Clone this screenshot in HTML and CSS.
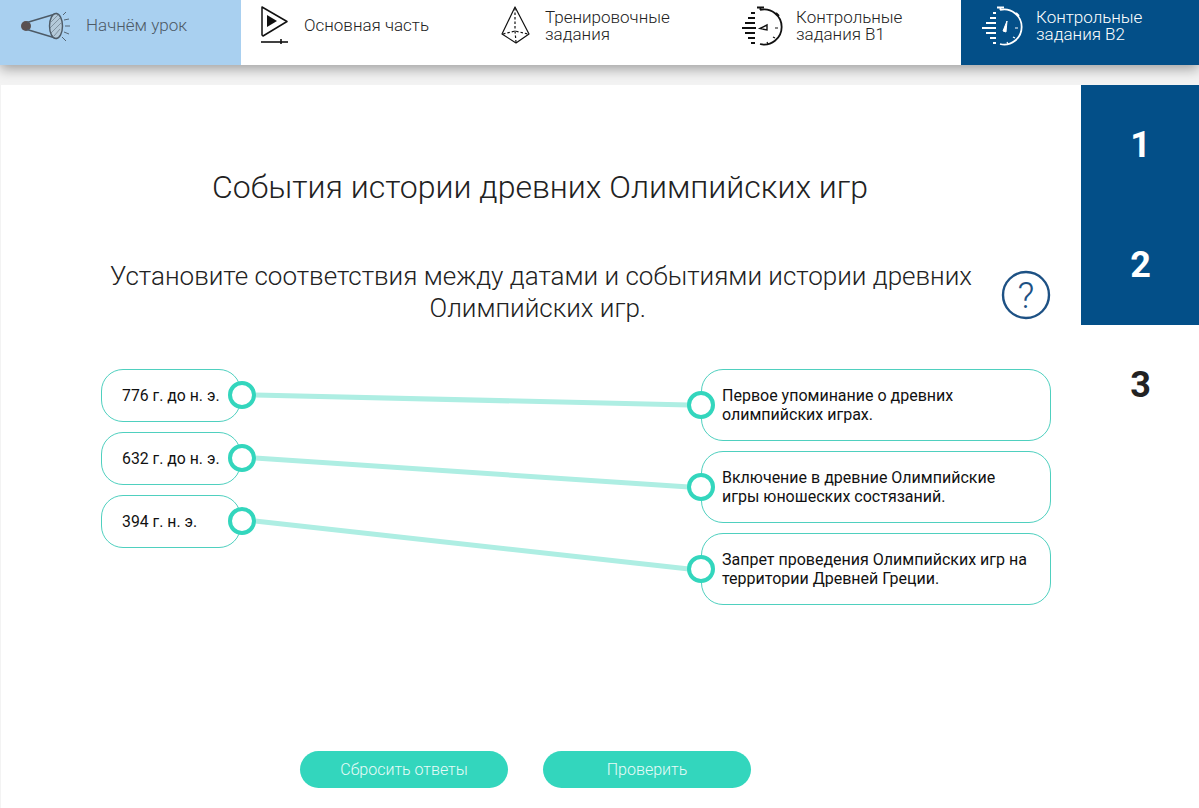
FILE: index.html
```html
<!DOCTYPE html>
<html lang="en">
<head>
    <meta charset="UTF-8">
    <meta name="viewport" content="width=device-width, initial-scale=1.0">
    <title>Контрольные задания B2</title>
    <link rel="stylesheet" href="styles.css">
</head>
<body>
    <header class="topbar">
        <a class="tab tab-intro">
            <svg width="72" height="65" viewBox="14 0 72 65" fill="none" stroke="#4d5a66" stroke-width="1">
                <circle cx="26" cy="26" r="5" fill="#5a5050" stroke="none"/>
                <path d="M27 22.5L57 13.5M27 29.5L57 38.5" stroke-width="1.4"/>
                <ellipse cx="56" cy="26" rx="6.5" ry="12.5" fill="#b4c9d9" stroke-width="1.4"/>
                <path d="M51 22l7-7M50 28l10-10M51 33l10-10M54 36l6-7" stroke-width="0.5"/>
                <path d="M63 15l3-3M64 20l5-1M65 26h5M64 32l5 2M62 37l4 4" stroke-width="0.9"/>
            </svg>
            <span>Начнём урок</span>
        </a>
        <a class="tab">
            <svg width="49" height="65" viewBox="255 0 49 65" fill="none" stroke="#111">
                <path d="M262 7L287 21.5L263 36L262 35Z" stroke-width="1.5" stroke-linejoin="round"/>
                <path d="M267 15L277 21L267 27Z" fill="#111" stroke="none"/>
                <path d="M261 42H288" stroke-width="1.6"/>
                <path d="M281 39V44" stroke-width="1.6"/>
            </svg>
            <span>Основная часть</span>
        </a>
        <a class="tab">
            <svg width="50" height="65" viewBox="495 0 50 65" fill="none" stroke="#111" stroke-width="1.2">
                <path d="M515 7L502 34L516 43L529 34Z" stroke-linejoin="round"/>
                <path d="M515 8V31M503 34L515 31L528 34M515 31L516 42" stroke-dasharray="2.5 2"/>
            </svg>
            <span>Тренировочные<br>задания</span>
        </a>
        <a class="tab">
            <svg width="61" height="65" viewBox="735 0 61 65" fill="none" stroke="#111" stroke-width="1.8">
                <path d="M760 10A17.5 17.5 0 1 1 760 44"/>
                <path d="M757 7.5H764M760.5 7.5V10M776 13L779 16"/>
                <path d="M751 13h4M748 18h7M745 23h10M742 28h14M745 33h10M748 38h7M751 43h4"/>
                <path d="M760 28.5L767 25V30Z" stroke-width="1.4"/>
                <path d="M775 28h3M773 37l2 1M767 42l1 2" stroke-width="1.2"/>
            </svg>
            <span>Контрольные<br>задания B1</span>
        </a>
        <a class="tab tab-active">
            <svg width="61" height="65" viewBox="975 0 61 65" fill="none" stroke="#fff" stroke-width="1.8">
                <path d="M1000 10A17.5 17.5 0 1 1 1000 44"/>
                <path d="M997 7.5H1004M1000.5 7.5V10M1016 13L1019 16"/>
                <path d="M993 13h3M990 18h6M986 23h10M982 28h14M986 33h10M990 38h6M993 43h3"/>
                <path d="M1007 21L1003 31L1006 32Z" fill="#fff" stroke-width="1"/>
                <path d="M1015 28h3M1013 37l2 1M1007 42l1 2" stroke-width="1.2"/>
            </svg>
            <span>Контрольные<br>задания B2</span>
        </a>
    </header>

    <main class="page">
        <section class="task">
            <h1 class="task-title">События истории древних Олимпийских игр</h1>

            <div class="question">
                <p class="question-text">Установите соответствия между датами и событиями истории древних Олимпийских игр.&nbsp;</p>
                <svg class="help" width="50" height="50" viewBox="0 0 50 50" fill="none">
                    <circle cx="25" cy="25" r="23" stroke="#1d5184" stroke-width="2.4"/>
                    <text x="25" y="38" text-anchor="middle" class="help-mark">?</text>
                </svg>
            </div>

            <div class="match">
                <ul class="match-col dates">
                    <li class="pill date">776 г. до н. э.</li>
                    <li class="pill date">632 г. до н. э.</li>
                    <li class="pill date">394 г. н. э.</li>
                </ul>
                <ul class="match-col events">
                    <li class="pill event">Первое упоминание о древних олимпийских играх.</li>
                    <li class="pill event">Включение в древние Олимпийские игры юношеских состязаний.</li>
                    <li class="pill event">Запрет проведения Олимпийских игр на территории Древней Греции.</li>
                </ul>
                <!-- lines and dots go over the pills -->
                <svg class="match-lines" width="950" height="236" viewBox="0 0 950 236" fill="none">
                    <g stroke="#aeeee3" stroke-width="5">
                        <path d="M154 26L588 36"/>
                        <path d="M154 89L588 118"/>
                        <path d="M154 152L588 200"/>
                    </g>
                    <g stroke="#33d6bd" stroke-width="4" fill="#fff">
                        <circle cx="141" cy="26" r="12"/>
                        <circle cx="141" cy="89" r="12"/>
                        <circle cx="141" cy="152" r="12"/>
                        <circle cx="600" cy="36" r="12"/>
                        <circle cx="600" cy="118" r="12"/>
                        <circle cx="600" cy="200" r="12"/>
                    </g>
                </svg>
            </div>

            <div class="actions">
                <button class="btn">Сбросить ответы</button>
                <button class="btn">Проверить</button>
            </div>
        </section>

        <nav class="steps">
            <a class="step step-done">1</a>
            <a class="step step-done">2</a>
            <a class="step">3</a>
        </nav>
    </main>
</body>
</html>
```

FILE: styles.css
```css
* {
    box-sizing: border-box;
}

body {
    margin: 0;
    height: 808px;
    overflow: hidden;
    background-color: #f3f3f3;
    font-family: Roboto, "Liberation Sans", sans-serif;
    color: #222;
}

.topbar {
    position: relative;
    z-index: 2;
    display: grid;
    grid-template-columns: 241px 240px 240px 240px 1fr;
    height: 65px;
    background-color: #fff;
    box-shadow: 0 4px 12px rgba(0, 0, 0, 0.35);
}

.tab {
    display: flex;
    align-items: center;
    padding-left: 14px;
    font-size: 17px;
    font-weight: 300;
    line-height: 17px;
    color: #222;
}

.tab svg {
    flex-shrink: 0;
}

.tab span {
    margin-bottom: 14px;
}

.tab-intro {
    background-color: #a9d0f0;
    color: #4d5a66;
}

.tab-active {
    background-color: #034f88;
    color: #fff;
}

.page {
    display: flex;
    height: 723px;
    margin: 20px 0 0 1px;
    background-color: #fff;
}

.task {
    display: flex;
    flex-direction: column;
    width: 1080px;
    padding: 0 30px 20px 100px;
}

.task-title {
    margin: 83px 0 0;
    padding-right: 72px;
    font-size: 32px;
    font-weight: 300;
    line-height: 38px;
    text-align: center;
}

.question {
    display: flex;
    align-items: center;
    gap: 20px;
    margin-top: 54px;
}

.question-text {
    flex: 1;
    margin: 0;
    font-size: 26px;
    font-weight: 300;
    line-height: 32px;
    text-align: center;
}

.help {
    flex-shrink: 0;
    margin-top: 6px;
}

.help-mark {
    font-family: Roboto, sans-serif;
    font-size: 37px;
    font-weight: 300;
    fill: #1d5184;
}

.match {
    position: relative;
    display: flex;
    justify-content: space-between;
    height: 236px;
    margin-top: 45px;
}

.match-col {
    display: flex;
    flex-direction: column;
    gap: 10px;
    margin: 0;
    padding: 0;
    list-style: none;
}

.pill {
    display: flex;
    align-items: center;
    border: 1px solid #4fd0bf;
    border-radius: 22px;
    background-color: #fff;
    color: #111;
}

.date {
    width: 140px;
    height: 53px;
    padding-left: 20px;
    font-size: 15.8px;
}

.event {
    width: 350px;
    height: 72px;
    padding: 0 20px;
    font-size: 16px;
    line-height: 19px;
}

.match-lines {
    position: absolute;
    top: 0;
    left: 0;
}

.actions {
    display: flex;
    gap: 35px;
    margin-top: auto;
    padding-left: 199px;
}

.btn {
    width: 208px;
    height: 37px;
    border: none;
    border-radius: 19px;
    background-color: #33d6bd;
    color: #e8fbf8;
    font-family: inherit;
    font-size: 16px;
    font-weight: 300;
    cursor: pointer;
}

.steps {
    display: flex;
    flex-direction: column;
    flex: 1;
}

.step {
    display: flex;
    align-items: center;
    justify-content: center;
    height: 120px;
    padding-left: 1px;
    font-size: 36px;
    font-weight: 700;
    color: #222;
}

.step-done {
    background-color: #034f88;
    color: #fff;
}
```
